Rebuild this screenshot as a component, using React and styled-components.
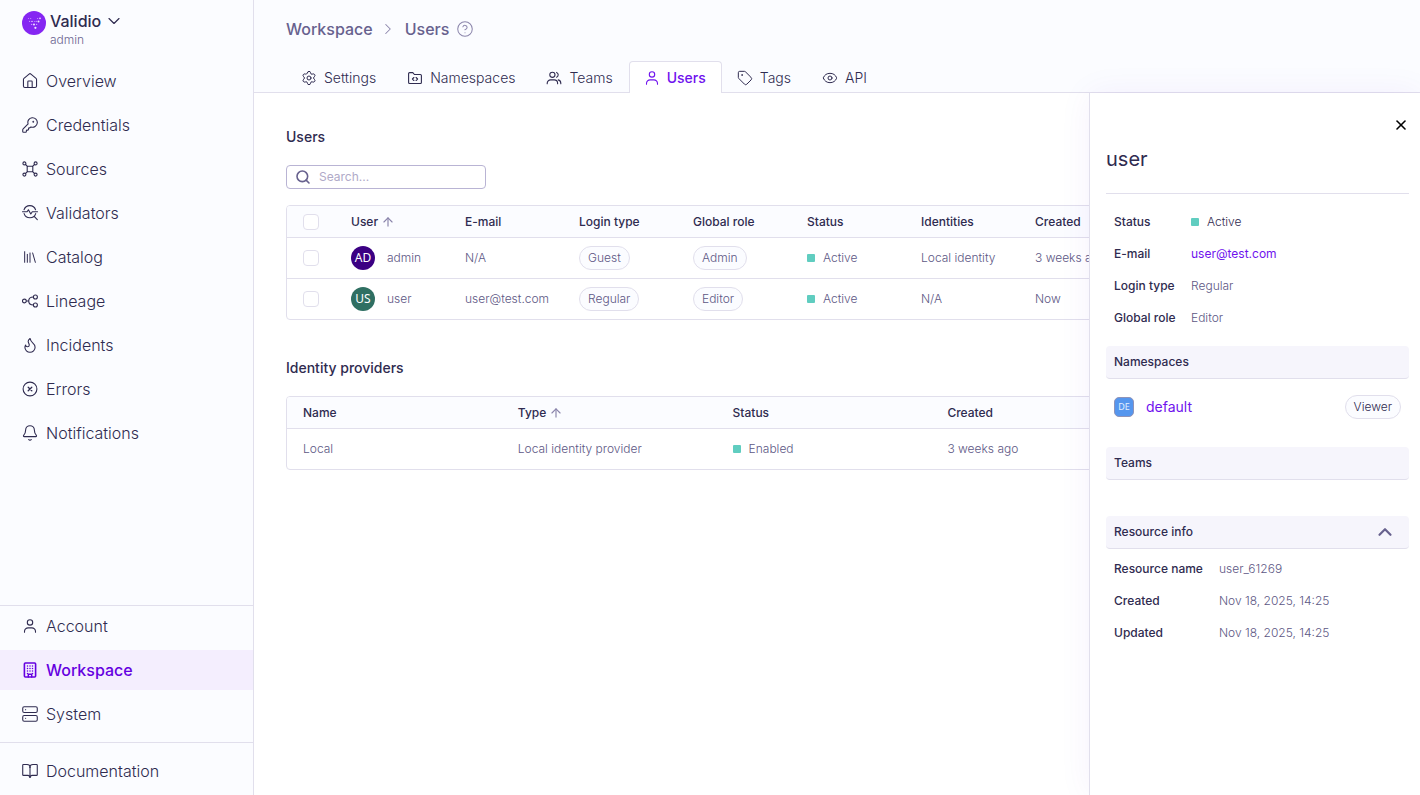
import React from 'react'
import styled, { createGlobalStyle } from 'styled-components'
import {
  House, KeyRound, Library, Flame, Bell, Server, BookOpen, Settings,
  Tag, Eye, ChevronDown, ChevronRight, ChevronUp,
  CircleQuestionMark, Search, ArrowUp, X,
} from 'lucide-react'

const mainLinks = [
  { label: 'Overview', icon: House, tight: true },
  { label: 'Credentials', icon: KeyRound, tight: true },
  { label: 'Sources', icon: SourcesIcon },
  { label: 'Validators', icon: ValidatorsIcon },
  { label: 'Catalog', icon: Library },
  { label: 'Lineage', icon: LineageIcon },
  { label: 'Incidents', icon: Flame, tight: true },
  { label: 'Errors', icon: ErrorsIcon },
  { label: 'Notifications', icon: Bell, tight: true },
]

const accountLinks = [
  { label: 'Account', icon: UserIcon },
  { label: 'Workspace', icon: BuildingIcon, active: true },
  { label: 'System', icon: Server, tight: true },
]

const tabs = [
  { label: 'Settings', icon: Settings },
  { label: 'Namespaces', icon: FolderIcon },
  { label: 'Teams', icon: TeamsIcon },
  { label: 'Users', icon: UserIcon, active: true },
  { label: 'Tags', icon: Tag },
  { label: 'API', icon: Eye },
]

const users = [
  { initials: 'AD', color: '#3b0083', name: 'admin', email: 'N/A', login: 'Guest', role: 'Admin', identity: 'Local identity', created: '3 weeks ago' },
  { initials: 'US', color: '#2f6f62', name: 'user', email: 'user@test.com', login: 'Regular', role: 'Editor', identity: 'N/A', created: 'Now' },
]

function Icon({ size = 16, children }) {
  return (
    <svg width={size} height={size} viewBox="0 0 16 16" fill="none" stroke="currentColor" strokeWidth="1.1" strokeLinecap="round" strokeLinejoin="round" aria-hidden="true">
      {children}
    </svg>
  )
}

function UserIcon() {
  return (
    <Icon>
      <circle cx="8" cy="4.4" r="2.7" />
      <path d="M2.5 14.3v-.8a3.6 3.6 0 0 1 3.6-3.6h3.8a3.6 3.6 0 0 1 3.6 3.6v.8" />
    </Icon>
  )
}

function TeamsIcon() {
  return (
    <Icon>
      <circle cx="6.4" cy="4.8" r="2.6" />
      <path d="M1.2 13.8v-.5a3.4 3.4 0 0 1 3.4-3.4h3.6a3.4 3.4 0 0 1 3.4 3.4v.5" />
      <path d="M10.6 2.4a2.6 2.6 0 0 1 0 4.8M12.2 9.9c1.6.4 2.6 1.7 2.6 3.4v.5" />
    </Icon>
  )
}

function FolderIcon() {
  return (
    <Icon>
      <path d="M1.6 3.6c0-.6.4-1 1-1h3.2l1.6 1.9h6c.6 0 1 .4 1 1v7c0 .6-.4 1-1 1H2.6c-.6 0-1-.4-1-1z" />
      <path d="M6.9 7.5L5.4 9l1.5 1.5M9.1 7.5L10.6 9l-1.5 1.5" />
    </Icon>
  )
}

function SourcesIcon() {
  return (
    <Icon>
      <rect x="5.2" y="5.2" width="5.6" height="5.6" rx="0.8" />
      <circle cx="2.4" cy="2.4" r="1.5" />
      <circle cx="13.6" cy="2.4" r="1.5" />
      <circle cx="2.4" cy="13.6" r="1.5" />
      <circle cx="13.6" cy="13.6" r="1.5" />
      <path d="M3.5 3.5l1.9 1.9M12.5 3.5l-1.9 1.9M3.5 12.5l1.9-1.9M12.5 12.5l-1.9-1.9" />
    </Icon>
  )
}

function ValidatorsIcon() {
  return (
    <Icon>
      <path d="M2 4.8a6.1 6.1 0 0 1 11.6 0M13.7 8.6a6.1 6.1 0 0 1-11.6 0M12.2 11.4l3.1 3.2" />
      <path d="M.5 6.8h4.6l1.3-2 2.4 4.2 1.5-2.2h5.2" />
    </Icon>
  )
}

function LineageIcon() {
  return (
    <Icon>
      <circle cx="2.4" cy="8" r="1.9" />
      <circle cx="13.4" cy="4" r="2" />
      <circle cx="13.4" cy="12" r="2" />
      <path d="M4.3 8h2.3M11.4 4c-3 0-4.7 1.8-4.7 4s1.7 4 4.7 4" />
    </Icon>
  )
}

function ErrorsIcon() {
  return (
    <Icon>
      <circle cx="8" cy="8" r="6.9" />
      <path d="M6.2 6.2l3.6 3.6M9.8 6.2L6.2 9.8" strokeWidth="1.3" />
    </Icon>
  )
}

function BuildingIcon() {
  return (
    <Icon>
      <rect x="2.4" y="1" width="11.2" height="14" rx="1" strokeWidth="1.6" />
      <path d="M5.5 4h.01M8 4h.01M10.5 4h.01M5.5 6.5h.01M8 6.5h.01M10.5 6.5h.01M5.5 9h.01M8 9h.01M10.5 9h.01M5.5 11.5h.01M10.5 11.5h.01" strokeWidth="1.5" />
      <path d="M6.3 15v-2.8h3.4V15" strokeWidth="1.4" />
    </Icon>
  )
}

function Logo() {
  return (
    <svg width="24" height="24" viewBox="0 0 24 24" aria-hidden="true">
      <circle cx="12" cy="12" r="12" fill="#8526f2" />
      <g fill="#c79bff">
        <circle cx="6.5" cy="7.5" r="0.5" />
        <circle cx="8.7" cy="7.5" r="0.6" />
        <circle cx="15.6" cy="7.5" r="0.6" />
        <circle cx="7.6" cy="10.4" r="0.6" />
        <circle cx="12.4" cy="10.4" r="0.5" />
        <circle cx="14.2" cy="10.4" r="0.7" />
        <circle cx="9.6" cy="13.4" r="0.7" />
        <circle cx="14.6" cy="13.4" r="0.7" />
      </g>
      <g fill="#f1e4ff">
        <circle cx="18" cy="7.4" r="0.8" />
        <circle cx="10" cy="10.4" r="0.7" />
        <circle cx="16.5" cy="10.4" r="1" />
        <circle cx="12" cy="13.6" r="1" />
        <circle cx="13.4" cy="16.8" r="1.1" />
      </g>
    </svg>
  )
}

function NavLink({ label, icon: Glyph, tight, active }) {
  const box = tight ? { viewBox: '1 1 22 22' } : {}
  return (
    <NavItem href="#" $active={active} aria-current={active ? 'page' : undefined}>
      <Glyph size={16} strokeWidth={1.5} {...box} />
      {label}
    </NavItem>
  )
}

function Sidebar() {
  return (
    <Aside>
      <Brand>
        <Logo />
        <BrandText>
          <BrandButton type="button">
            Validio
            <ChevronDown size={20} strokeWidth={1.4} />
          </BrandButton>
          <BrandUser>admin</BrandUser>
        </BrandText>
      </Brand>
      <NavGroup>
        {mainLinks.map((link) => <NavLink key={link.label} {...link} />)}
      </NavGroup>
      <NavGroup $bottom>
        {accountLinks.map((link) => <NavLink key={link.label} {...link} />)}
      </NavGroup>
      <NavFooter>
        <NavLink label="Documentation" icon={BookOpen} tight />
      </NavFooter>
    </Aside>
  )
}

function Header() {
  return (
    <Top>
      <Crumbs aria-label="Breadcrumb">
        <Crumb href="#">Workspace</Crumb>
        <ChevronRight size={18} strokeWidth={1.4} />
        <Crumb href="#">Users</Crumb>
        <HelpButton type="button" aria-label="Help">
          <CircleQuestionMark size={16} strokeWidth={1.4} viewBox="1 1 22 22" />
        </HelpButton>
      </Crumbs>
      <Tabs role="tablist">
        {tabs.map(({ label, icon: Glyph, active }) => (
          <Tab key={label} type="button" role="tab" aria-selected={!!active} $active={active}>
            <Glyph size={16} strokeWidth={1.5} />
            {label}
          </Tab>
        ))}
      </Tabs>
    </Top>
  )
}

function UsersTable() {
  return (
    <TableFrame>
      <Table>
        <colgroup>
          <Col $width="48px" />
          <Col /><Col /><Col /><Col /><Col /><Col /><Col /><Col /><Col />
          <Col $width="26px" />
        </colgroup>
        <thead>
          <tr>
            <Th><Check type="checkbox" aria-label="Select all users" /></Th>
            <Th><Inline $gap={3}>User <ArrowUp size={14} /></Inline></Th>
            <Th>E-mail</Th>
            <Th>Login type</Th>
            <Th>Global role</Th>
            <Th>Status</Th>
            <Th>Identities</Th>
            <Th>Created</Th>
            <Th /><Th /><Th />
          </tr>
        </thead>
        <tbody>
          {users.map((u) => (
            <tr key={u.name}>
              <Td><Check type="checkbox" aria-label={`Select ${u.name}`} /></Td>
              <Td>
                <Inline $gap={12}>
                  <Avatar $color={u.color}>{u.initials}</Avatar>
                  {u.name}
                </Inline>
              </Td>
              <Td>{u.email}</Td>
              <Td><Pill>{u.login}</Pill></Td>
              <Td><Pill>{u.role}</Pill></Td>
              <Td><Inline $gap={8}><Dot />Active</Inline></Td>
              <Td>{u.identity}</Td>
              <Td>{u.created}</Td>
              <Td /><Td /><Td />
            </tr>
          ))}
        </tbody>
      </Table>
    </TableFrame>
  )
}

function ProvidersTable() {
  return (
    <TableFrame>
      <Table>
        <colgroup>
          <Col /><Col /><Col /><Col /><Col />
          <Col $width="26px" />
        </colgroup>
        <thead>
          <tr>
            <Th>Name</Th>
            <Th><Inline $gap={3}>Type <ArrowUp size={14} /></Inline></Th>
            <Th>Status</Th>
            <Th>Created</Th>
            <Th /><Th />
          </tr>
        </thead>
        <tbody>
          <tr>
            <Td>Local</Td>
            <Td>Local identity provider</Td>
            <Td><Inline $gap={8}><Dot />Enabled</Inline></Td>
            <Td>3 weeks ago</Td>
            <Td /><Td />
          </tr>
        </tbody>
      </Table>
    </TableFrame>
  )
}

function UserDrawer() {
  return (
    <Drawer aria-label="User details">
      <CloseButton type="button" aria-label="Close">
        <X size={16} strokeWidth={2.4} />
      </CloseButton>
      <DrawerTitle>user</DrawerTitle>
      <Details $labels="77px">
        <dt>Status</dt>
        <dd><StatusText><Dot />Active</StatusText></dd>
        <dt>E-mail</dt>
        <dd><MailLink href="mailto:user@test.com">user@test.com</MailLink></dd>
        <dt>Login type</dt>
        <dd>Regular</dd>
        <dt>Global role</dt>
        <dd>Editor</dd>
      </Details>
      <SectionBar>Namespaces</SectionBar>
      <NamespaceRow>
        <NamespaceBadge>DE</NamespaceBadge>
        <NamespaceLink href="#">default</NamespaceLink>
        <Pill $dark>Viewer</Pill>
      </NamespaceRow>
      <SectionBar>Teams</SectionBar>
      <EmptyTeams />
      <SectionBar as="button" type="button" aria-expanded="true">
        Resource info
        <ChevronUp size={22} strokeWidth={2.4} />
      </SectionBar>
      <Details $labels="105px" $tight>
        <dt>Resource name</dt>
        <dd>user_61269</dd>
        <dt>Created</dt>
        <dd>Nov 18, 2025, 14:25</dd>
        <dt>Updated</dt>
        <dd>Nov 18, 2025, 14:25</dd>
      </Details>
    </Drawer>
  )
}

export default function App() {
  return (
    <Container>
      <GlobalStyle />
      <Sidebar />
      <Main>
        <Header />
        <Content>
          <SectionTitle>Users</SectionTitle>
          <SearchBox>
            <Search size={16} strokeWidth={2.4} />
            <input type="search" aria-label="Search users" placeholder="Search..." />
          </SearchBox>
          <UsersTable />
          <SectionTitle $spaced>Identity providers</SectionTitle>
          <ProvidersTable />
          <UserDrawer />
        </Content>
      </Main>
    </Container>
  )
}

const GlobalStyle = createGlobalStyle`
  * {
    box-sizing: border-box;
  }
  body {
    margin: 0;
    color: #2f2b50;
    background: #fff;
    font-family: Inter, "Liberation Sans", sans-serif;
    font-size: 12px;
    line-height: 16px;
  }
  button, input {
    font: inherit;
    color: inherit;
  }
  button {
    padding: 0;
    border: none;
    background: none;
    cursor: pointer;
  }
  a {
    color: inherit;
    text-decoration: none;
  }
  svg {
    flex-shrink: 0;
  }
`

const Container = styled.div`
  display: grid;
  grid-template-columns: 254px minmax(0, 1fr);
  height: 100vh;
  overflow: hidden;
`

const Aside = styled.aside`
  display: flex;
  flex-direction: column;
  min-height: 0;
  background: #fbfcff;
  border-right: 1px solid #e1dfec;
`

const Brand = styled.div`
  display: flex;
  gap: 4px;
  padding: 11px 22px 13px;
`

const BrandText = styled.div`
  display: flex;
  flex-direction: column;
`

const BrandButton = styled.button`
  display: flex;
  align-items: center;
  gap: 3px;
  font-size: 16px;
  line-height: 20px;
  font-weight: 500;
`

const BrandUser = styled.span`
  line-height: 17px;
  font-weight: 300;
  color: #6b6590;
`

const NavGroup = styled.nav`
  display: flex;
  flex-direction: column;
  gap: 4px;
  ${({ $bottom }) => $bottom && `
    margin-top: auto;
    padding-bottom: 8px;
    border-top: 1px solid #e1dfec;
  `}
`

const NavItem = styled.a`
  display: flex;
  align-items: center;
  gap: 8px;
  height: 40px;
  padding: 0 22px;
  font-size: 16px;
  line-height: 24px;
  font-weight: ${({ $active }) => ($active ? 500 : 300)};
  color: ${({ $active }) => ($active ? '#6500e0' : '#2f2b50')};
  background: ${({ $active }) => ($active ? '#f4eefe' : 'transparent')};
`

const NavFooter = styled.nav`
  padding: 8px 0 4px;
  border-top: 1px solid #e1dfec;
`

const Main = styled.main`
  display: flex;
  flex-direction: column;
  min-width: 0;
`

const Top = styled.header`
  display: flex;
  flex-direction: column;
  justify-content: space-between;
  height: 93px;
  background: #fbfcff;
  border-bottom: 1px solid #e1dfec;
`

const Crumbs = styled.nav`
  display: flex;
  align-items: center;
  gap: 8px;
  padding: 17px 32px 0;
  color: #8b85ab;
  > svg {
    margin-left: -2px;
  }
`

const Crumb = styled.a`
  font-size: 16px;
  line-height: 24px;
  font-weight: 500;
  color: #67618e;
`

const HelpButton = styled.button`
  display: flex;
  color: #8b85ab;
`

const Tabs = styled.div`
  display: flex;
  margin-bottom: -1px;
  padding: 0 32px;
`

const Tab = styled.button`
  display: flex;
  align-items: center;
  gap: 7px;
  height: 32px;
  padding: 0 15px 0 14px;
  font-size: 14px;
  font-weight: ${({ $active }) => ($active ? 500 : 300)};
  color: ${({ $active }) => ($active ? '#6f12ee' : '#2f2b50')};
  border: 1px solid ${({ $active }) => ($active ? '#e1dfec' : 'transparent')};
  border-bottom: none;
  border-radius: 4px 4px 0 0;
  background: ${({ $active }) => ($active ? '#fff' : 'transparent')};
`

const Content = styled.section`
  position: relative;
  flex: 1;
  min-height: 0;
  padding: 32px;
`

const SectionTitle = styled.h2`
  margin: ${({ $spaced }) => ($spaced ? '36px 0 16px' : '0 0 16px')};
  font-size: 14px;
  line-height: 24px;
  font-weight: 500;
`

const SearchBox = styled.label`
  display: flex;
  align-items: center;
  gap: 8px;
  width: 200px;
  height: 24px;
  margin-bottom: 16px;
  padding: 0 8px;
  color: #67618e;
  border: 1px solid #b9b4d4;
  border-radius: 4px;
  input {
    flex: 1;
    min-width: 0;
    padding: 0;
    border: none;
    outline: none;
    background: none;
  }
  input::placeholder {
    color: #b0aac8;
    opacity: 1;
  }
`

const TableFrame = styled.div`
  border: 1px solid #e1dfec;
  border-radius: 4px;
  overflow: hidden;
`

const Table = styled.table`
  width: 100%;
  table-layout: fixed;
  border-spacing: 0;
`

const Col = styled.col`
  width: ${({ $width }) => $width || 'auto'};
`

const Th = styled.th`
  height: 32px;
  padding: 0 0 0 16px;
  text-align: left;
  font-weight: 500;
  white-space: nowrap;
  background: #fbfcff;
  border-bottom: 1px solid #e1dfec;
  svg {
    color: #8b85ab;
  }
`

const Td = styled.td`
  height: 41px;
  padding: 0 0 0 16px;
  font-weight: 300;
  color: #5d5784;
  white-space: nowrap;
  tr:not(:last-child) > & {
    border-bottom: 1px solid #e1dfec;
  }
  tr:last-child > & {
    height: 40px;
  }
`

const Inline = styled.span`
  display: flex;
  align-items: center;
  gap: ${({ $gap }) => $gap}px;
`

const Check = styled.input`
  display: block;
  width: 16px;
  height: 16px;
  margin: 0;
  appearance: none;
  background: #fff;
  border: 1px solid #e1dfec;
  border-radius: 4px;
  &:checked {
    background: #6f12ee;
  }
`

const Avatar = styled.span`
  display: flex;
  align-items: center;
  justify-content: center;
  width: 24px;
  height: 24px;
  border-radius: 50%;
  color: #fff;
  font-family: "Noto Sans", sans-serif;
  font-weight: 400;
  background: ${({ $color }) => $color};
`

const Pill = styled.span`
  display: inline-flex;
  align-items: center;
  height: 24px;
  padding: 0 8px;
  font-weight: 300;
  color: ${({ $dark }) => ($dark ? '#2f2b50' : '#5d5784')};
  background: #fbfcff;
  border: 1px solid #e1dfec;
  border-radius: 12px;
`

const Dot = styled.span`
  width: 8px;
  height: 8px;
  border-radius: 1px;
  background: #60cdc0;
`

const Drawer = styled.aside`
  position: absolute;
  top: 0;
  right: 0;
  bottom: 0;
  width: 331px;
  display: flex;
  flex-direction: column;
  padding: 24px 11px 0 16px;
  background: #fff;
  border-left: 1px solid #e1dfec;
  box-shadow: 0 0 32px rgba(101, 0, 224, 0.06);
`

const CloseButton = styled.button`
  display: flex;
  align-self: flex-end;
  color: #000;
`

const DrawerTitle = styled.h1`
  margin: 0 0 12px;
  padding: 12px 0 20px;
  font-size: 20px;
  line-height: 28px;
  font-weight: 400;
  border-bottom: 1px solid #e1dfec;
`

const Details = styled.dl`
  display: grid;
  grid-template-columns: ${({ $labels }) => $labels} 1fr;
  grid-auto-rows: 32px;
  align-items: center;
  margin: ${({ $tight }) => ($tight ? '4px 0 0' : '0 0 12px')};
  padding: 0 8px;
  dt {
    font-weight: 500;
  }
  dd {
    margin: 0;
    font-weight: 300;
    color: #5d5784;
  }
`

const StatusText = styled.span`
  display: flex;
  align-items: center;
  gap: 8px;
  color: #2f2b50;
`

const MailLink = styled.a`
  font-weight: 400;
  color: #6f12ee;
`

const SectionBar = styled.div`
  display: flex;
  align-items: center;
  justify-content: space-between;
  height: 33px;
  flex-shrink: 0;
  padding: 0 13px 0 8px;
  font-weight: 500;
  background: #f6f5fc;
  border-bottom: 1px solid #e1dfec;
  border-radius: 4px;
  svg {
    color: #67618e;
  }
`

const NamespaceRow = styled.div`
  display: flex;
  align-items: center;
  gap: 12px;
  margin-bottom: 28px;
  padding: 16px 8px 0;
`

const NamespaceBadge = styled.span`
  display: flex;
  align-items: center;
  justify-content: center;
  width: 20px;
  height: 20px;
  font-family: "Noto Sans", sans-serif;
  font-size: 9px;
  color: #e3efff;
  background: #5596ee;
  border: 1px solid #8f93b8;
  border-radius: 5px;
`

const NamespaceLink = styled.a`
  flex: 1;
  font-size: 14px;
  color: #6f12ee;
`

const EmptyTeams = styled.div`
  height: 36px;
`
